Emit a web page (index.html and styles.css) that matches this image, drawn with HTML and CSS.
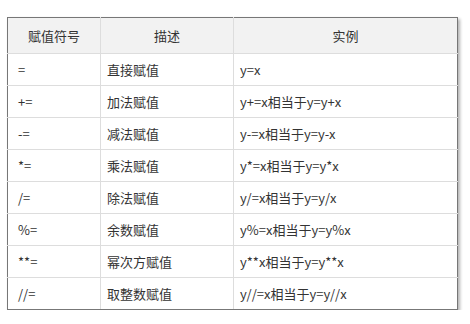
FILE: index.html
```html
<!DOCTYPE html>
<html lang="zh">
<head>
<meta charset="utf-8">
<link rel="stylesheet" href="styles.css">
</head>
<body>
<table class="ops">
  <colgroup>
    <col class="c1"><col class="c2"><col class="c3">
  </colgroup>
  <thead>
    <tr><th>赋值符号</th><th>描述</th><th>实例</th></tr>
  </thead>
  <tbody>
    <tr><td class="sym">=</td><td>直接赋值</td><td>y=x</td></tr>
    <tr><td class="sym">+=</td><td>加法赋值</td><td>y+=x相当于y=y+x</td></tr>
    <tr><td class="sym">-=</td><td>减法赋值</td><td>y-=x相当于y=y-x</td></tr>
    <tr><td class="sym">*=</td><td>乘法赋值</td><td>y*=x相当于y=y*x</td></tr>
    <tr><td class="sym">/=</td><td>除法赋值</td><td>y/=x相当于y=y/x</td></tr>
    <tr><td class="sym">%=</td><td>余数赋值</td><td>y%=x相当于y=y%x</td></tr>
    <tr><td class="sym">**=</td><td>幂次方赋值</td><td>y**x相当于y=y**x</td></tr>
    <tr><td class="sym">//=</td><td>取整数赋值</td><td>y//=x相当于y=y//x</td></tr>
  </tbody>
</table>
</body>
</html>
```
FILE: styles.css
```css
html, body {
  margin: 0;
  background: #fff;
}
body {
  padding: 17px 0 0 7px;
  font-family: "Noto Sans CJK SC", sans-serif;
  font-size: 13px;
  color: #333;
}
.ops {
  border-collapse: collapse;
  table-layout: fixed;
  width: 450px;
  border: 1px solid #777;
  box-shadow: 2px 2px 3px rgba(0,0,0,0.3);
}
.c1 { width: 93px; }
.c2 { width: 133px; }
.c3 { width: 224px; }
.ops th {
  background: #f2f2f2;
  font-weight: normal;
  height: 35px;
  padding: 0;
  text-align: center;
  border: 1px solid #ddd;
  border-top: none;
}
.ops td {
  height: 31px;
  padding: 0 0 0 6px;
  border: 1px solid #ddd;
  text-align: left;
  white-space: nowrap;
}
.ops td.sym { padding-left: 10px; }
.ops th:first-child, .ops td:first-child { border-left: 1px solid #777; }
.ops th:last-child, .ops td:last-child { border-right: 1px solid #777; }
.ops tr:last-child td { border-bottom: 1px solid #777; }
```
